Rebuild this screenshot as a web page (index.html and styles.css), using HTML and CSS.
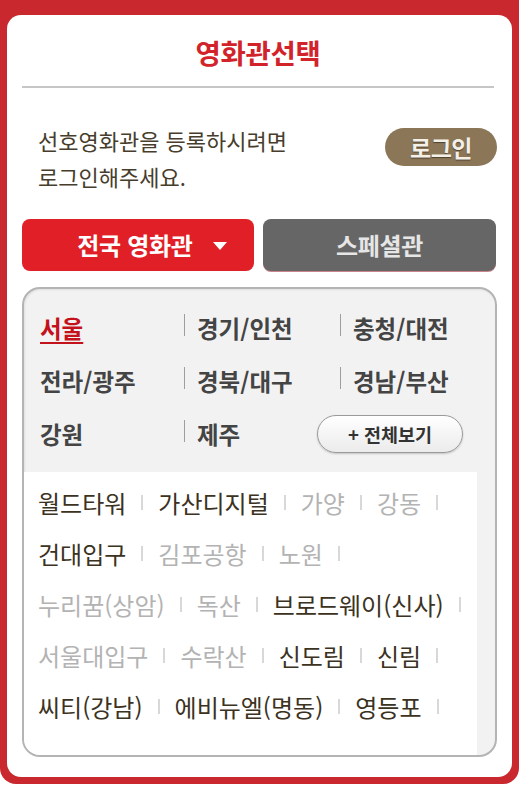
FILE: index.html
```html
<!DOCTYPE html>
<html lang="ko">
<head>
<meta charset="utf-8">
<title>영화관선택</title>
<link rel="stylesheet" href="styles.css">
</head>
<body>
<div class="frame">
  <div class="card">
    <div class="head">
      <h1 class="title">영화관선택</h1>
    </div>
    <div class="intro">
      <p class="intro-text">선호영화관을 등록하시려면<br>로그인해주세요.</p>
      <button class="login">로그인</button>
    </div>
    <div class="tabs">
      <button class="tab tab-red">전국 영화관<svg class="caret" width="14" height="8" viewBox="0 0 14 8"><polygon points="0,0 14,0 7,8" fill="#fff"/></svg></button>
      <button class="tab tab-gray">스페셜관</button>
    </div>
    <div class="panel">
      <ul class="regions">
        <li class="region"><span class="active">서울</span></li>
        <li class="region sep">경기/인천</li>
        <li class="region sep">충청/대전</li>
        <li class="region">전라/광주</li>
        <li class="region sep">경북/대구</li>
        <li class="region sep">경남/부산</li>
        <li class="region">강원</li>
        <li class="region sep">제주</li>
        <li class="region"><button class="all-btn">+ 전체보기</button></li>
      </ul>
      <div class="list">
        <ul class="list-row">
          <li class="on">월드타워</li>
          <li class="on">가산디지털</li>
          <li>가양</li>
          <li>강동</li>
        </ul>
        <ul class="list-row">
          <li class="on">건대입구</li>
          <li>김포공항</li>
          <li>노원</li>
        </ul>
        <ul class="list-row">
          <li>누리꿈(상암)</li>
          <li>독산</li>
          <li class="on">브로드웨이(신사)</li>
        </ul>
        <ul class="list-row">
          <li>서울대입구</li>
          <li>수락산</li>
          <li class="on">신도림</li>
          <li class="on">신림</li>
        </ul>
        <ul class="list-row">
          <li class="on">씨티(강남)</li>
          <li class="on">에비뉴엘(명동)</li>
          <li class="on">영등포</li>
        </ul>
      </div>
    </div>
  </div>
</div>
</body>
</html>
```

FILE: styles.css
```css
* {
  box-sizing: border-box;
  margin: 0;
  padding: 0;
}

body {
  margin: 0;
  background: #ffffff;
  font-family: "Noto Sans CJK KR", "Noto Sans", sans-serif;
}

button {
  font-family: inherit;
  cursor: pointer;
}

.frame {
  width: 519px;
  height: 784px;
  background: #c9282e;
  padding: 15px 7px 7px;
  border-radius: 0 0 16px 16px;
}

.card {
  height: 100%;
  background: #ffffff;
  border-radius: 14px;
  padding: 0 15px;
  display: flex;
  flex-direction: column;
}

.head {
  padding: 15px 0 12px;
  margin-right: 3px;
  border-bottom: 2px solid #c6c6c6;
}

.title {
  height: 44px;
  line-height: 44px;
  text-align: center;
  font-size: 27.5px;
  font-weight: 700;
  color: #d2232b;
  letter-spacing: -0.3px;
}

.intro {
  display: flex;
  justify-content: space-between;
  align-items: flex-start;
  margin-top: 34px;
  padding-left: 16px;
}

.intro-text {
  font-size: 22px;
  line-height: 36px;
  letter-spacing: 0;
  color: #473d2c;
}

.login {
  margin-top: 6px;
  width: 112px;
  height: 38px;
  border: 0;
  border-radius: 19px;
  background: #8b7657;
  color: #f4f0e8;
  font-size: 23px;
  font-weight: 700;
  line-height: 38px;
  letter-spacing: -0.5px;
  text-shadow: 0 1px 1px rgba(0, 0, 0, 0.45);
}

.tabs {
  display: grid;
  grid-template-columns: 232px 233px;
  gap: 9px;
  margin-top: 25px;
}

.tab {
  height: 52px;
  border: 0;
  border-radius: 8px;
  font-size: 24px;
  font-weight: 700;
  line-height: 52px;
  letter-spacing: -0.3px;
  display: flex;
  align-items: center;
  justify-content: center;
}

.tab-red {
  background: #e01f26;
  color: #ffffff;
  padding-left: 28px;
}

.caret {
  margin-left: 20px;
  margin-top: 2px;
}

.tab-gray {
  background: #666666;
  color: #e6e6e6;
  box-shadow: 0 1px 0 #c9858a;
}

.panel {
  margin-top: 16px;
  height: 470px;
  border: 2px solid #b4b4b4;
  border-radius: 18px;
  background: #f2f2f2;
  display: flex;
  flex-direction: column;
  overflow: hidden;
  box-shadow: inset 1px 1px 2px rgba(0, 0, 0, 0.08);
}

.regions {
  list-style: none;
  display: grid;
  grid-template-columns: 144px 156px 1fr;
  padding: 12px 0 12px 16px;
}

.region {
  display: flex;
  align-items: center;
  height: 53px;
  font-size: 23.5px;
  font-weight: 700;
  color: #444444;
}

.region.sep::before {
  content: "";
  width: 1px;
  height: 22px;
  background: #9e9e9e;
  margin-right: 12px;
  margin-bottom: 6px;
}

.active {
  color: #c3121b;
  text-decoration: underline;
  text-decoration-thickness: 2px;
  text-underline-offset: 4px;
}

.all-btn {
  margin-left: -23px;
  width: 146px;
  height: 38px;
  border: 1.5px solid #9a9a9a;
  border-radius: 19px;
  background: linear-gradient(#ffffff, #ebebeb);
  box-shadow: 0 1px 2px rgba(0, 0, 0, 0.2);
  font-size: 18.5px;
  font-weight: 700;
  color: #333333;
  line-height: 34px;
}

.list {
  flex: 1;
  background: #ffffff;
  margin-right: 18px;
  padding: 5px 0 0 14px;
}

.list-row {
  list-style: none;
  display: flex;
  align-items: center;
  height: 51px;
  font-size: 24px;
}

.list-row li {
  display: flex;
  align-items: center;
  color: #b3b3b3;
  white-space: nowrap;
}

.list-row li.on {
  color: #3b3222;
}

.list-row li::after {
  content: "";
  width: 2px;
  height: 15px;
  background: #d8d8d8;
  margin: 0 15px;
}
```
